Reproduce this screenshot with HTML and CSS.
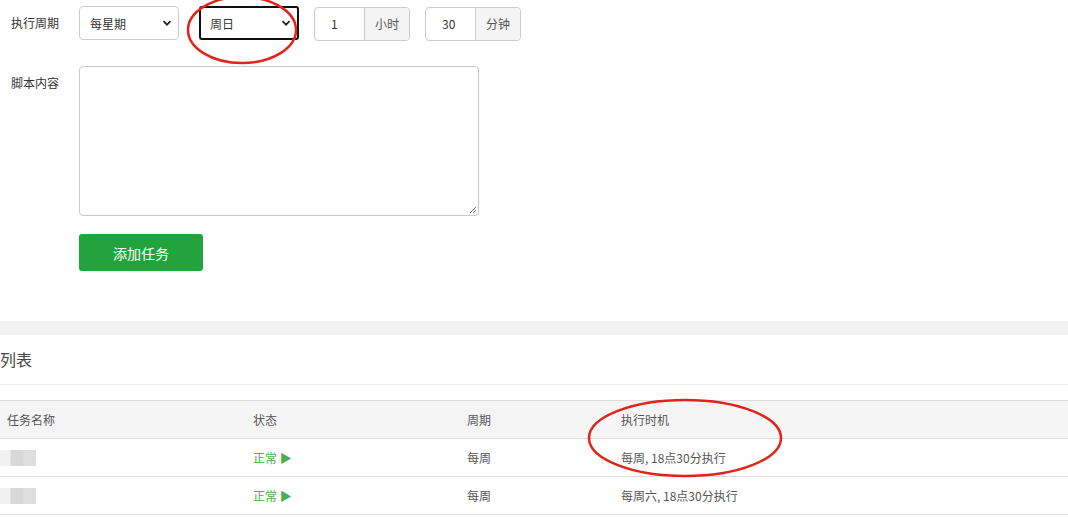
FILE: index.html
```html
<!DOCTYPE html>
<html lang="zh-CN">
<head>
    <meta charset="UTF-8">
    <meta name="viewport" content="width=device-width, initial-scale=1.0">
    <title>计划任务</title>
    <link rel="stylesheet" href="styles.css">
</head>
<body>

<div class="panel">
    <!-- 添加任务表单 -->
    <form class="task-form">
        <div class="form-row row-cycle">
            <label class="form-label">执行周期</label>
            <div class="form-fields">
                <div class="select-box">
                    <span>每星期</span>
                    <svg class="caret" width="10" height="10" viewBox="0 0 10 10"><path d="M1.5 3.2 L5 6.7 L8.5 3.2" fill="none" stroke="#222" stroke-width="1.8"/></svg>
                </div>
                <div class="select-box focused">
                    <span>周日</span>
                    <svg class="caret" width="10" height="10" viewBox="0 0 10 10"><path d="M1.5 3.2 L5 6.7 L8.5 3.2" fill="none" stroke="#222" stroke-width="1.8"/></svg>
                </div>
                <div class="input-group">
                    <span class="input-value">1</span>
                    <span class="input-addon">小时</span>
                </div>
                <div class="input-group">
                    <span class="input-value">30</span>
                    <span class="input-addon">分钟</span>
                </div>
            </div>
        </div>

        <div class="form-row">
            <label class="form-label label-top">脚本内容</label>
            <div class="form-fields">
                <div class="script-box">
                    <svg class="grip" width="9" height="9" viewBox="0 0 9 9"><path d="M8 2 L2 8 M8 5 L5 8" stroke="#777" stroke-width="1"/></svg>
                </div>
            </div>
        </div>

        <div class="form-row">
            <span class="form-label"></span>
            <div class="form-fields">
                <button type="button" class="btn-add">添加任务</button>
            </div>
        </div>
    </form>
</div>

<div class="divider"></div>

<div class="panel list-panel">
    <div class="list-title">列表</div>
    <table class="task-table">
        <thead>
            <tr>
                <th class="col-name">任务名称</th>
                <th class="col-status">状态</th>
                <th class="col-cycle">周期</th>
                <th>执行时机</th>
            </tr>
        </thead>
        <tbody>
            <tr>
                <td class="cell-name"><span class="blur-name"></span></td>
                <td class="status-ok">正常 ▶</td>
                <td>每周</td>
                <td>每周, 18点30分执行</td>
            </tr>
            <tr>
                <td class="cell-name"><span class="blur-name"></span></td>
                <td class="status-ok">正常 ▶</td>
                <td>每周</td>
                <td>每周六, 18点30分执行</td>
            </tr>
        </tbody>
    </table>
</div>

<!-- 标注用的红圈 -->
<svg class="mark mark-select" width="120" height="72" viewBox="0 0 120 72">
    <ellipse cx="60" cy="34" rx="54" ry="33" fill="none" stroke="#e2231a" stroke-width="2.5"/>
</svg>
<svg class="mark mark-column" width="210" height="90" viewBox="0 0 210 90">
    <ellipse cx="105" cy="45" rx="96" ry="38" fill="none" stroke="#e2231a" stroke-width="2.5"/>
</svg>

</body>
</html>
```

FILE: styles.css
```css
body {
    margin: 0;
    font-family: "Microsoft YaHei", "Noto Sans CJK SC", "Noto Sans", sans-serif;
    font-size: 12px;
    color: #333;
    background: #fff;
}
.panel {
    background: #fff;
}
.task-form {
    padding: 6px 0 50px 11px;
}
.form-row {
    display: flex;
    margin-bottom: 18px;
}
.form-row.row-cycle {
    margin-bottom: 25px;
}
.form-row:last-child {
    margin-bottom: 0;
}
.form-label {
    width: 68px;
    flex-shrink: 0;
    line-height: 33px;
    color: #333;
}
.label-top {
    line-height: 34px;
}
.form-fields {
    display: flex;
    align-items: flex-start;
}
.select-box {
    box-sizing: border-box;
    width: 100px;
    height: 34px;
    border: 1px solid #ccc;
    border-radius: 4px;
    margin-right: 20px;
    padding: 0 6px 0 10px;
    display: flex;
    align-items: center;
    justify-content: space-between;
    color: #333;
}
.select-box.focused {
    border: 2px solid #111;
    border-radius: 3px;
    padding-left: 9px;
    margin-right: 15px;
}
.input-group {
    display: flex;
    height: 34px;
    margin-right: 15px;
    margin-top: 1px;
    border: 1px solid #ccc;
    border-radius: 4px;
    overflow: hidden;
    box-sizing: border-box;
}
.input-value {
    width: 50px;
    line-height: 32px;
    padding-left: 16px;
    box-sizing: border-box;
    border-right: 1px solid #ccc;
}
.input-addon {
    width: 44px;
    line-height: 32px;
    text-align: center;
    background: #f4f4f4;
    color: #555;
}
.script-box {
    box-sizing: border-box;
    width: 400px;
    height: 150px;
    border: 1px solid #c8c8c8;
    border-radius: 4px;
    position: relative;
}
.grip {
    position: absolute;
    right: 1px;
    bottom: 1px;
}
.btn-add {
    width: 124px;
    height: 37px;
    border: none;
    border-radius: 3px;
    background: #22a33c;
    color: #fff;
    font-family: inherit;
    font-size: 14px;
    cursor: pointer;
}
.divider {
    height: 14px;
    background: #f2f2f2;
}
.list-title {
    font-size: 16px;
    color: #444;
    line-height: 49px;
    border-bottom: 1px solid #eee;
}
.task-table {
    width: 100%;
    margin-top: 15px;
    border-collapse: collapse;
    border-top: 1px solid #ddd;
}
.task-table th {
    background: #f5f5f5;
    font-weight: normal;
    color: #555;
    text-align: left;
    height: 37px;
    padding: 0 7px;
    border-bottom: 1px solid #ddd;
}
.task-table td {
    height: 37px;
    padding: 0 7px;
    color: #555;
    border-bottom: 1px solid #ddd;
}
.col-name {
    width: 232px;
}
.col-status {
    width: 200px;
}
.col-cycle {
    width: 140px;
}
.cell-name {
    padding-left: 0 !important;
}
.blur-name {
    display: block;
    width: 36px;
    height: 16px;
    background: linear-gradient(90deg, #f1f1f1 0, #f1f1f1 10px, #d8d8d8 11px, #d8d8d8 23px, #dedede 24px, #dedede 36px);
}
.status-ok {
    color: #4cae4c !important;
}
.mark {
    position: absolute;
    pointer-events: none;
}
.mark-select {
    left: 182px;
    top: -4px;
}
.mark-column {
    left: 580px;
    top: 393px;
}
```
